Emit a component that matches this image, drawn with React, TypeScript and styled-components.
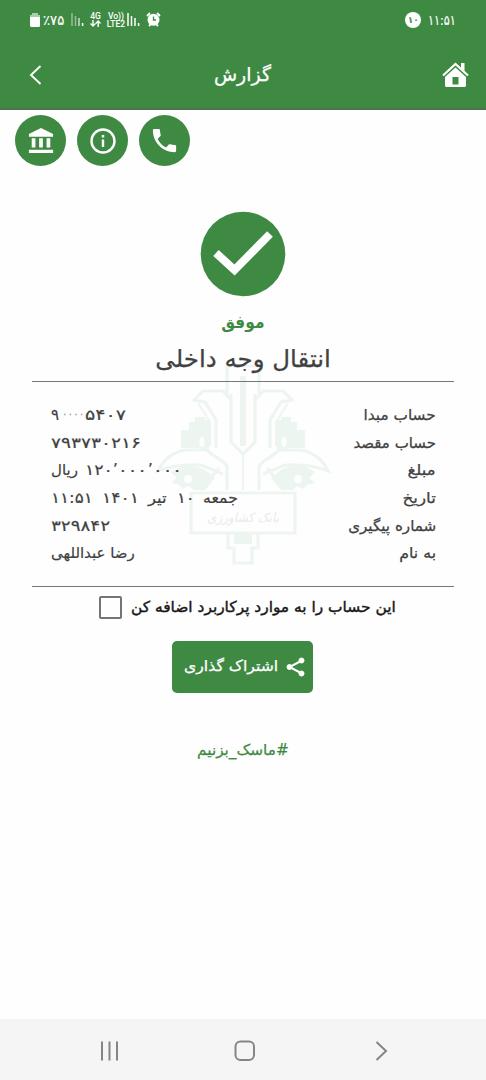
import React from "react";
import styled, { createGlobalStyle } from "styled-components";

const green = "#3f8a43";

const GlobalStyle = createGlobalStyle`
  * { box-sizing: border-box; }
  body { margin: 0; background: #fefefe; font-family: "DejaVu Sans", sans-serif; color: #414141; }
`;

const Screen = styled.div`
  width: 486px;
  height: 1080px;
  display: flex;
  flex-direction: column;
  overflow: hidden;
  background: #fefefe;
  isolation: isolate;
`;

const Header = styled.header`
  height: 110px;
  flex: none;
  background: ${green};
  border-bottom: 2px solid #49774b;
  color: #fff;
`;

const StatusBar = styled.div`
  height: 39px;
  display: flex;
  justify-content: space-between;
  align-items: center;
  padding: 0 30px 0 29px;
`;

const StatusGroup = styled.div<{ $gap: number }>`
  display: flex;
  align-items: center;
  gap: ${(p) => p.$gap}px;
`;

const DayBadge = styled.span`
  width: 16px;
  height: 16px;
  border-radius: 50%;
  background: #fff;
  color: ${green};
  display: flex;
  align-items: center;
  justify-content: center;
  font-size: 9px;
  font-weight: bold;
`;

const Battery = styled.span`
  width: 26px;
  display: flex;
`;

const Network = styled.span<{ $w: number }>`
  width: ${(p) => p.$w}px;
  display: flex;
  flex-direction: column;
  align-items: center;
  white-space: nowrap;
  font: 500 8.5px/8px Roboto, sans-serif;
`;

const TitleBar = styled.div`
  height: 69px;
  display: flex;
  align-items: center;
  justify-content: space-between;
  padding: 2px 17px 0 29px;
`;

const Fit = styled.span<{ $size: number; $x?: number; $bold?: boolean; $stroke?: number; $color?: string; $origin?: string; $dy?: number }>`
  display: inline-block;
  white-space: nowrap;
  unicode-bidi: isolate;
  font-size: ${(p) => p.$size}px;
  font-weight: ${(p) => (p.$bold ? 700 : 400)};
  color: ${(p) => p.$color ?? "inherit"};
  -webkit-text-stroke: ${(p) => p.$stroke ?? 0.25}px currentColor;
  transform: translateY(${(p) => p.$dy ?? 0}px) scaleX(${(p) => p.$x ?? 1});
  transform-origin: ${(p) => p.$origin ?? "center"};
`;

const Actions = styled.div`
  display: flex;
  gap: 11px;
  padding: 5px 0 0 15px;
`;

const RoundButton = styled.button`
  width: 51px;
  height: 51px;
  border: 0;
  padding: 0;
  border-radius: 50%;
  background: ${green};
  display: flex;
  align-items: center;
  justify-content: center;
`;

const Result = styled.section`
  display: flex;
  flex-direction: column;
  align-items: center;
  padding-top: 45px;
`;

const Status = styled.div`
  height: 34px;
  margin-top: 8px;
  display: flex;
  align-items: center;
`;

const Operation = styled.h1`
  margin: 0;
  height: 42px;
  line-height: 35px;
  font-weight: 400;
`;

const Receipt = styled.section`
  position: relative;
  height: 206px;
  margin: 0 32px;
  border-top: 1px solid #777;
  border-bottom: 1px solid #777;
  padding: 19px 18px 0 19px;
`;

const Watermark = styled.svg`
  position: absolute;
  left: 123px;
  top: -20px;
  z-index: -1;
`;

const Row = styled.div`
  height: 27.7px;
  display: flex;
  direction: rtl;
  justify-content: space-between;
  align-items: center;
`;

const Value = styled.span`
  direction: ltr;
  display: flex;
  align-items: center;
`;

const Part = styled.span<{ $w: number; $x?: number; $size?: number; $color?: string }>`
  width: ${(p) => p.$w}px;
  unicode-bidi: isolate;
  white-space: nowrap;
  font-size: ${(p) => p.$size ?? 15}px;
  color: ${(p) => p.$color ?? "inherit"};
  -webkit-text-stroke: 0.2px currentColor;
  transform: scaleX(${(p) => p.$x ?? 1});
  transform-origin: left;
`;

const Favourite = styled.label`
  height: 41px;
  display: flex;
  align-items: center;
  gap: 9px;
  padding-left: 99px;
  color: #161616;
`;

const Box = styled.span`
  width: 23px;
  height: 23px;
  flex: none;
  border: 2px solid #757575;
  border-radius: 2px;
`;

const ShareButton = styled.button`
  width: 141px;
  height: 52px;
  margin: 13px 0 0 172px;
  padding: 0 8px 0 12px;
  border: 0;
  border-radius: 5px;
  background: ${green};
  color: #fff;
  font-family: inherit;
  display: flex;
  align-items: center;
  justify-content: space-between;
`;

const Hashtag = styled.div`
  margin-top: 46px;
  text-align: center;
  line-height: 22px;
`;

const NavBar = styled.nav`
  height: 61px;
  margin-top: auto;
  background: #f5f5f5;
  display: flex;
  align-items: center;
  padding: 3px 0 0 99px;
`;

const NavIcon = styled.svg<{ $gap?: number }>`
  margin-left: ${(p) => p.$gap ?? 0}px;
  fill: none;
  stroke: #858585;
  stroke-width: 2;
`;

const Bars = ({ faint }: { faint?: boolean }) => (
  <svg width="13" height="14" viewBox="0 0 13 14" stroke="#fff" strokeWidth="1.5" fill="none">
    <path d="M1 0V13" opacity={faint ? 0.45 : 1} />
    <path d="M4.5 3V13" opacity={faint ? 0.45 : 1} />
    <path d="M8 5V13" opacity={faint ? 0.7 : 1} />
    <path d="M11.6 10V13" />
  </svg>
);

const BankMark = () => (
  <Watermark width="176" height="204" viewBox="0 0 176 204" fill="none" stroke="#eef5f1" strokeWidth="3.2">
    <g fill="#edf5f0" stroke="none">
      <path d="M26 68H34V60H40V55H50V58H54V90C44 84 36 86 26 86Z" />
      <path d="M150 68H142V60H136V55H126V58H122V90C132 84 140 86 150 86Z" />
      <path d="M27 104Q42 103 50 108L60 116 50 128H38L34 124 28 127 24 123 16 121 22 116 16 110Z" />
      <path d="M149 104Q134 103 126 108L116 116 126 128H138L142 124 148 127 152 123 160 121 154 116 160 110Z" />
      <path d="M79 171H97V182H79Z" />
    </g>
    <g fill="#fefefe" stroke="none">
      <ellipse cx="47" cy="80" rx="2.500" ry="5" />
      <ellipse cx="129" cy="80" rx="2.500" ry="5" />
      <circle cx="33" cy="117" r="4" />
      <circle cx="143" cy="117" r="4" />
    </g>
    <path d="M76 38L68 29H48L39 38 50 40 61 58V86M100 38L108 29H128L137 38 126 40 115 58V86" />
    <path d="M72 32V4H104V32M76 32V80L88 92 100 80V32" />
    <path d="M43 41L55 60V84M133 41L121 60V84" strokeWidth="2" />
    <path d="M88 14V84" strokeWidth="6" />
    <path d="M88 90V128" strokeWidth="2" />
    <path d="M72 128V104C68 98 60 96 52 88H30C18 90 8 98 3 109C16 104 30 102 46 103L68 112" fill="#fefefe" />
    <path d="M104 128V104C108 98 116 96 124 88H146C158 90 168 98 173 109C160 104 146 102 130 103L108 112" fill="#fefefe" />
    <path d="M64 106L46 128M112 106L130 128" />
    <path d="M36 131H140V171H36Z" />
    <path d="M73 172V186H79V201H97V186H103V172" />
    <text x="88" y="160" textAnchor="middle" direction="rtl" fontSize="13" fontStyle="italic" fill="#e6ede9" stroke="none" textLength="72" lengthAdjust="spacingAndGlyphs">بانک کشاورزی</text>
  </Watermark>
);

export default function App() {
  return (
    <Screen>
      <GlobalStyle />
      <Header>
        <StatusBar>
          <StatusGroup $gap={2}>
            <svg width="12" height="14" viewBox="0 0 12 14">
              <path d="M3 0H9V2H11V4H1V2H3Z" fill="#a9cfaa" />
              <path d="M1 4H11V12.5Q11 14 9.5 14H2.5Q1 14 1 12.5Z" fill="#fff" />
            </svg>
            <Battery><Fit $size={14} $x={0.94} $stroke={0.15} $origin="left">٪۷۵</Fit></Battery>
            <Bars faint />
            <Network $w={19}><span>4G</span>
              <svg width="11" height="7" viewBox="0 0 11 7" fill="none" stroke="#fff" strokeWidth="1.400"><path d="M3 0V6M0.500 3.500L3 6 5.500 3.500M8.200 7V1M5.800 3.500L8.200 1 10.600 3.500" /></svg>
            </Network>
            <Network $w={18}><span>Vo))</span><span>LTE2</span></Network>
            <Bars />
            <svg width="19" height="15" viewBox="-4 0 19 15">
              <circle cx="7.5" cy="7.8" r="6" fill="#fff" />
              <path d="M1 4L4 1M14 4L11 1M3 14L5 12M12 14L10 12" stroke="#fff" strokeWidth="1.8" />
              <path d="M7.5 4.5V8H10" stroke={green} strokeWidth="1.3" fill="none" />
            </svg>
          </StatusGroup>
          <StatusGroup $gap={0}>
            <DayBadge>۱۰</DayBadge>
            <Fit $size={14} $x={0.8} $stroke={0.15} $origin="right">۱۱:۵۱</Fit>
          </StatusGroup>
        </StatusBar>
        <TitleBar>
          <svg width="14" height="20" viewBox="0 0 14 20" fill="none" stroke="#fff" strokeWidth="1.9">
            <path d="M11.5 1L2 10 11.5 19" />
          </svg>
          <Fit $size={19} $dy={-1}>گزارش</Fit>
          <svg width="27" height="25" viewBox="0 0 27 25">
            <path d="M1 13.5L13.5 2 26 13.5" fill="none" stroke="#fff" strokeWidth="2.2" />
            <path d="M19 1H22.5V9L19 6Z" fill="#fff" />
            <path fillRule="evenodd" d="M13.5 5.5L24 15V23.5Q24 25 22.5 25H4.500Q3 25 3 23.5V15ZM10.500 15V22.500H16.500V15Z" fill="#fff" />
          </svg>
        </TitleBar>
      </Header>

      <Actions>
        <RoundButton>
          <svg width="26" height="28" viewBox="0 0 28 28" fill="#fff">
            <path d="M14 0L27 6.500V9.500H1V6.500ZM4 11H8V21H4ZM12 11H16V21H12ZM20 11H24V21H20ZM1 23.500H27V27H1Z" />
          </svg>
        </RoundButton>
        <RoundButton>
          <svg width="28" height="28" viewBox="0 0 28 28" fill="none" stroke="#fff" strokeWidth="2.400">
            <circle cx="14" cy="14" r="11.500" />
            <path d="M14 12.500V20M14 8V10.500" />
          </svg>
        </RoundButton>
        <RoundButton>
          <svg width="31" height="31" viewBox="0 0 24 24" fill="#fff">
            <path d="M6.620 10.790c1.440 2.830 3.760 5.140 6.590 6.590l2.200-2.200c.27-.27.67-.36 1.020-.24 1.120.37 2.330.57 3.570.57.55 0 1 .45 1 1V20c0 .55-.45 1-1 1-9.390 0-17-7.610-17-17 0-.55.45-1 1-1h3.500c.55 0 1 .45 1 1 0 1.250.2 2.450.57 3.570.11.35.03.74-.25 1.020z" />
          </svg>
        </RoundButton>
      </Actions>

      <Result>
        <svg width="86" height="86" viewBox="0 0 86 86">
          <circle cx="43" cy="43" r="42.300" fill={green} />
          <path d="M16 42L34.500 59 70 23" fill="none" stroke="#fff" strokeWidth="8" />
        </svg>
        <Status><Fit $size={17} $x={0.91} $bold $stroke={0} $color={green}>موفق</Fit></Status>
        <Operation><Fit $size={24} $x={1.02}>انتقال وجه داخلی</Fit></Operation>
      </Result>

      <Receipt>
        <BankMark />
        <Row>
          <Fit $size={15} $x={1.02} $origin="right">حساب مبدا</Fit>
          <Value>
            <Part $w={11}>۹</Part>
            <Part $w={23} $size={11} $x={0.95} $color="#999">۰۰۰۰</Part>
            <Part $w={43} $x={1.27}>۵۴۰۷</Part>
          </Value>
        </Row>
        <Row>
          <Fit $size={15} $origin="right">حساب مقصد</Fit>
          <Value><Part $w={90} $x={1.24}>۷۹۳۷۳۰۲۱۶</Part></Value>
        </Row>
        <Row>
          <Fit $size={15} $x={1.1} $origin="right">مبلغ</Fit>
          <Value>
            <Part $w={34}>ریال</Part>
            <Part $w={28} $x={1.15}>۱۲۰</Part><Part $w={5}>’</Part>
            <Part $w={30} $x={1.2}>۰۰۰</Part><Part $w={5}>’</Part>
            <Part $w={30} $x={1.2}>۰۰۰</Part>
          </Value>
        </Row>
        <Row>
          <Fit $size={15} $x={1.12} $origin="right">تاریخ</Fit>
          <Value>
            <Part $w={51} $x={1.12}>۱۱:۵۱</Part>
            <Part $w={46} $x={1.15}>۱۴۰۱</Part>
            <Part $w={29} $x={1.1}>تیر</Part>
            <Part $w={26} $x={1.1}>۱۰</Part>
            <Part $w={35} $x={1.05}>جمعه</Part>
          </Value>
        </Row>
        <Row>
          <Fit $size={15} $x={1.01} $origin="right">شماره پیگیری</Fit>
          <Value><Part $w={62} $x={1.22}>۳۲۹۸۴۲</Part></Value>
        </Row>
        <Row>
          <Fit $size={15} $x={1.05} $origin="right">به نام</Fit>
          <Value><Part $w={86}>رضا عبداللهی</Part></Value>
        </Row>
      </Receipt>

      <Favourite>
        <Box />
        <Fit $size={15} $x={1.027} $stroke={0.4} $origin="left" $dy={-1}>این حساب را به موارد پرکاربرد اضافه کن</Fit>
      </Favourite>
      <ShareButton>
        <Fit $size={15} $x={1.045} $origin="left" $dy={-1}>اشتراک گذاری</Fit>
        <svg width="19" height="20" viewBox="0 0 19 20" fill="#fff" stroke="#fff">
          <path d="M16 3.500L3.500 10 16 16.500" fill="none" strokeWidth="2" />
          <circle cx="15.500" cy="3.500" r="2.500" /><circle cx="3.500" cy="10" r="2.500" /><circle cx="15.500" cy="16.500" r="2.500" />
        </svg>
      </ShareButton>
      <Hashtag><Fit $size={15} $x={1.02} $color={green} dir="rtl">#ماسک_بزنیم</Fit></Hashtag>

      <NavBar>
        <NavIcon width="20" height="20" viewBox="0 0 20 20"><path d="M3 0.500V19.500M10.500 0.500V19.500M18 0.500V19.500" /></NavIcon>
        <NavIcon $gap={115} width="22" height="22" viewBox="0 0 22 22"><rect x="1.500" y="1.500" width="18.500" height="18.500" rx="5" /></NavIcon>
        <NavIcon $gap={119} width="13" height="20" viewBox="0 0 13 20"><path d="M1.500 1L11 10 1.500 19" /></NavIcon>
      </NavBar>
    </Screen>
  );
}
